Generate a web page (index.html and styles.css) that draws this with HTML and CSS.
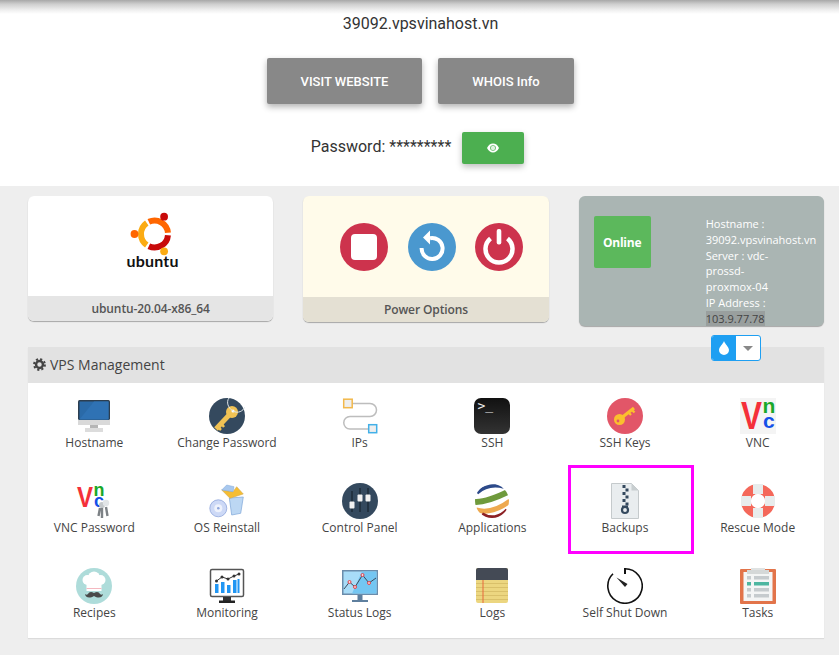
FILE: index.html
```html
<!DOCTYPE html>
<html lang="en">
<head>
<meta charset="utf-8">
<title>VPS Management</title>
<link rel="stylesheet" href="styles.css">
</head>
<body>
<header class="top">
  <div class="top-shadow"></div>
  <div class="title">39092.vpsvinahost.vn</div>
  <div class="actions">
    <a class="btn-grey btn-visit">VISIT WEBSITE</a>
    <a class="btn-grey btn-whois">WHOIS Info</a>
  </div>
  <div class="password">
    <span class="password-text">Password: *********</span>
    <button class="btn-eye" type="button">
      <svg width="12" height="10" viewBox="0 0 12 10"><path d="M0 5C1.500 2 3.500.6 6 .6S10.500 2 12 5c-1.500 3-3.500 4.400-6 4.400S1.500 8 0 5z" fill="#fff"/><circle cx="6" cy="5" r="2.800" fill="#4caf50"/><circle cx="6" cy="5" r="2.200" fill="#dff2e0"/></svg>
    </button>
  </div>
</header>

<main class="content">
  <section class="cards">
    <div class="card card-os">
      <div class="card-body os-body">
        <svg width="60" height="68" viewBox="0 0 60 68">
          <g fill="none" stroke-width="6">
            <path d="M27.800 18.770A13.500 13.500 0 0 1 46.950 29.820" stroke="#f60"/>
            <path d="M46.950 32.180A13.500 13.500 0 0 1 27.800 43.230" stroke="#c80a0a"/>
            <path d="M25.760 42.060A13.500 13.500 0 0 1 25.760 19.940" stroke="#fbab13"/>
          </g>
          <circle cx="43.100" cy="13.700" r="3.900" fill="#c80a0a"/>
          <circle cx="43.100" cy="48.300" r="3.900" fill="#fbab13"/>
          <circle cx="13.500" cy="31" r="3.900" fill="#f60"/>
          <text class="ubuntu-word" x="5.500" y="64" textLength="52" lengthAdjust="spacing">ubuntu</text>
        </svg>
      </div>
      <div class="card-band">ubuntu-20.04-x86_64</div>
    </div>

    <div class="card card-power">
      <div class="card-body power-body">
        <svg width="48" height="48" viewBox="0 0 48 48"><circle cx="24" cy="24" r="24" fill="#cd334d"/><rect x="11" y="11" width="26" height="26" rx="4" fill="#fff"/></svg>
        <svg width="48" height="48" viewBox="0 0 48 48"><circle cx="24" cy="24" r="24" fill="#4a98cf"/><path d="M22 15.200A10.500 10.500 0 1 1 13.600 25" fill="none" stroke="#fff" stroke-width="4"/><path d="M22 7.500v14l-7-7z" fill="#fff"/></svg>
        <svg width="48" height="48" viewBox="0 0 48 48"><circle cx="24" cy="24" r="24" fill="#cd334d"/><path d="M15.500 15.500A13.500 13.500 0 1 0 32.500 15.500" fill="none" stroke="#fff" stroke-width="4.500"/><rect x="21.700" y="6" width="4.600" height="15.500" rx="2" fill="#fff"/></svg>
      </div>
      <div class="card-band">Power Options</div>
    </div>

    <div class="card card-status">
      <div class="online">Online</div>
      <div class="status-text">
        <div>Hostname :</div>
        <div>39092.vpsvinahost.vn</div>
        <div>Server : vdc-</div>
        <div>prossd-</div>
        <div>proxmox-04</div>
        <div>IP Address :</div>
        <div><span class="ip">103.9.77.78</span></div>
      </div>
      <div class="split-btn">
        <span class="split-left"><svg width="10" height="14" viewBox="0 0 10 14"><path d="M5 0C4 3 0 6 0 9a5 5 0 0 0 10 0C10 6 6 3 5 0z" fill="#fff"/></svg></span>
        <span class="split-right"><span class="caret"></span></span>
      </div>
    </div>
  </section>

  <section class="manage">
    <h2 class="manage-head">
      <svg width="13" height="13" viewBox="0 0 14 14"><circle cx="7" cy="7" r="3.700" fill="none" stroke="#444" stroke-width="2.600"/><circle cx="7" cy="7" r="5.800" fill="none" stroke="#444" stroke-width="2.200" stroke-dasharray="2.300 2.250"/></svg>
      <span>VPS Management</span>
    </h2>
    <div class="grid">
      <div class="tool">
        <svg class="ico" viewBox="0 0 36 36"><rect x="2" y="2" width="32" height="20" rx="1.500" fill="#2c3e50"/><rect x="3.500" y="3.500" width="29" height="18" fill="#2a6aa8"/><path d="M3.500 21.500 18 3.500h14.500v18z" fill="#2f72b4"/><rect x="2" y="22" width="32" height="5" fill="#d9d9d9"/><rect x="14" y="27" width="8" height="4" fill="#b5b5b5"/><rect x="9" y="30" width="18" height="4" fill="#dcdcdc"/></svg>
        <span>Hostname</span>
      </div>
      <div class="tool">
        <svg class="ico" viewBox="0 0 36 36"><circle cx="18" cy="18" r="18" fill="#34495e"/><path d="M22 15 7 31" stroke="#f0c254" stroke-width="5"/><path d="M12 25l3 4M9 29l3 3" stroke="#f0c254" stroke-width="2.500"/><circle cx="23" cy="14" r="6" fill="#f0c254"/><circle cx="24" cy="13" r="1.500" fill="#fff"/><path d="M24 13C19 10 17 4 20 0M24 13c5 3 10 0 12-4" fill="none" stroke="#dfe6ea" stroke-width="1"/></svg>
        <span>Change Password</span>
      </div>
      <div class="tool">
        <svg class="ico" viewBox="0 0 36 36"><path d="M10 5.500h18a6.500 6.500 0 0 1 0 13H8a6.250 6.250 0 0 0 0 12.500h18" fill="none" stroke="#bdbdbd" stroke-width="1.500"/><rect x="1.700" y="1.200" width="8.500" height="8.500" fill="#eee" stroke="#f2b84b" stroke-width="1.500"/><rect x="26.700" y="26.700" width="8" height="8" fill="#eee" stroke="#42b0e8" stroke-width="1.500"/></svg>
        <span>IPs</span>
      </div>
      <div class="tool">
        <svg class="ico" viewBox="0 0 36 36"><defs><linearGradient id="term" x1="0" y1="0" x2="0" y2="1"><stop offset="0" stop-color="#111"/><stop offset="1" stop-color="#333"/></linearGradient></defs><rect width="36" height="36" rx="7" fill="url(#term)"/><text class="term-text" x="3.500" y="11.500">&gt;_</text></svg>
        <span>SSH</span>
      </div>
      <div class="tool">
        <svg class="ico" viewBox="0 0 36 36"><circle cx="18" cy="18" r="18" fill="#e25668"/><path d="M13 21 27 10" stroke="#fbc02d" stroke-width="3.200"/><path d="M21 14l3 3M24.500 11.500l3 3" stroke="#fbc02d" stroke-width="2.400"/><circle cx="12.500" cy="21.500" r="5.500" fill="#fbc02d"/><circle cx="11" cy="23" r="1.400" fill="#e25668"/></svg>
        <span>SSH Keys</span>
      </div>
      <div class="tool">
        <svg class="ico" viewBox="0 0 36 36"><rect width="36" height="36" fill="#f4f4f4"/><text class="vnc-v" x="1" y="31" font-size="38" textLength="21" lengthAdjust="spacingAndGlyphs">V</text><text class="vnc-n" x="22.500" y="15" font-size="21">n</text><text class="vnc-c" x="23" y="30" font-size="21">c</text></svg>
        <span>VNC</span>
      </div>

      <div class="tool">
        <svg class="ico" viewBox="0 0 36 36"><text class="vnc-v" x="1" y="24" font-size="30" textLength="16" lengthAdjust="spacingAndGlyphs">V</text><text class="vnc-n" x="17.500" y="13" font-size="18">n</text><text class="vnc-c" x="18" y="24" font-size="18">c</text><g fill="none" stroke="#7d8286" stroke-width="2.400"><path d="M26 24v11M30 24l1.500 9M24 25l-1.500 8"/></g><circle cx="26" cy="22" r="3" fill="#c4c8cb"/><circle cx="30" cy="20" r="3.200" fill="#e2e5e7"/></svg>
        <span>VNC Password</span>
      </div>
      <div class="tool">
        <svg class="ico" viewBox="0 0 36 36"><path d="M20.300 15l14-1-2.600 16.300-9 1.700z" fill="#bcd7f3" stroke="#7ea6d8" stroke-width=".7"/><path d="M12.700 7 21 15.300 34.300 11 27.700 3.700 24 8.700z" fill="#f5bd33" stroke="#c9a24a" stroke-width=".5"/><path d="M17.700 2 25 3.700 24 8.700 12.700 7z" fill="#a8c8ee" stroke="#7ea6d8" stroke-width=".5"/><circle cx="9.300" cy="25.300" r="8.500" fill="#cdd9f6" stroke="#8fa6dc" stroke-width=".8"/><circle cx="9.300" cy="25.300" r="4" fill="#eef2fc"/><circle cx="9.300" cy="25.300" r="1.300" fill="#8fa6dc"/></svg>
        <span>OS Reinstall</span>
      </div>
      <div class="tool">
        <svg class="ico" viewBox="0 0 36 36"><circle cx="18" cy="18" r="18" fill="#34495e"/><path d="M10 8v21M18 5v24M26 5v24" stroke="#1d2b39" stroke-width="1.500"/><rect x="7.500" y="18.500" width="5" height="7" rx="1" fill="#f1f1f1"/><rect x="15.500" y="11.500" width="5" height="7" rx="1" fill="#f1f1f1"/><rect x="23.500" y="11.500" width="5" height="7" rx="1" fill="#f1f1f1"/></svg>
        <span>Control Panel</span>
      </div>
      <div class="tool">
        <svg class="ico" viewBox="0 0 36 36"><defs><clipPath id="sphere"><circle cx="18" cy="18" r="17"/></clipPath></defs><g clip-path="url(#sphere)" fill="none"><path d="M3 10Q14 0 30 4" stroke="#2d4a8a" stroke-width="3.500"/><path d="M0 19C10 20 24 14 36 8" stroke="#6f9a3c" stroke-width="6"/><path d="M2 27C12 30 24 27 36 18" stroke="#eea94f" stroke-width="5"/><path d="M8 31C16 36 26 35 33 27" stroke="#8c2024" stroke-width="3.500"/></g></svg>
        <span>Applications</span>
      </div>
      <div class="tool">
        <svg class="ico" viewBox="0 0 36 36"><path d="M4.500.5h20l7 7v28h-27z" fill="#e9edef" stroke="#c5cacc"/><path d="M24.500.5v7h7z" fill="#c8ced0"/><path d="M15.500 2h3v3h-3zM18.500 5.500h3v3h-3zM15.500 9h3v3h-3zM18.500 12.500h3v3h-3zM15.500 16h3v3h-3zM18.500 19.500h3v3h-3z" fill="#34495e"/><circle cx="18" cy="27" r="3" fill="none" stroke="#34495e" stroke-width="2.200"/><rect x="15" y="22.500" width="6" height="2.500" fill="#34495e"/></svg>
        <span>Backups</span>
      </div>
      <div class="tool">
        <svg class="ico" viewBox="0 0 36 36"><circle cx="18" cy="18" r="12" fill="none" stroke="#f4685a" stroke-width="10"/><path d="M13 1h10v10H13zM13 25h10v10H13zM1 13h10v10H1zM25 13h10v10H25z" fill="#e8ecec"/><circle cx="18" cy="18" r="7" fill="#fff"/></svg>
        <span>Rescue Mode</span>
      </div>

      <div class="tool">
        <svg class="ico" viewBox="0 0 36 36"><circle cx="18" cy="18" r="18" fill="#aedcda"/><g fill="#fff"><circle cx="11.500" cy="12" r="5"/><circle cx="18" cy="9.500" r="6"/><circle cx="24.500" cy="12" r="5"/><rect x="10.500" y="12" width="15" height="11"/></g><rect x="10.500" y="20" width="15" height="1" fill="#f4b8c0"/><path d="M18 25c-3-2-5-1-6 1-1 1-2 1-3 0 0 3 4 5 9 2 5 3 9 1 9-2-1 1-2 1-3 0-1-2-3-3-6-1z" fill="#4a4a4a"/></svg>
        <span>Recipes</span>
      </div>
      <div class="tool">
        <svg class="ico" viewBox="0 0 36 36"><rect x="1.500" y="1.500" width="33" height="27" rx="1.500" fill="#fff" stroke="#555" stroke-width="1.500"/><path d="M6 16h3.500v9H6zM12 14h3.500v11H12zM18 17h3.500v8H18zM24 12h3.500v13H24zM28.500 11h2v14h-2z" fill="#2196f3"/><path d="M7.500 13 13 9l6 2 6-3 5-2" fill="none" stroke="#333" stroke-width="1"/><g fill="#333"><circle cx="7.500" cy="13" r="1.500"/><circle cx="13" cy="9" r="1.500"/><circle cx="19" cy="11" r="1.500"/><circle cx="25" cy="8" r="1.500"/><circle cx="30" cy="6" r="1.500"/></g><rect x="14" y="29" width="8" height="4" fill="#333"/><rect x="10" y="32.500" width="16" height="2.500" fill="#222"/></svg>
        <span>Monitoring</span>
      </div>
      <div class="tool">
        <svg class="ico" viewBox="0 0 36 36"><rect x="0" y="2" width="36" height="25" fill="#6b8cab"/><rect x="1.500" y="3.500" width="33" height="22" fill="#a8dcf8"/><path d="M20 3.500h14.500v22H10z" fill="#74c6f2"/><path d="M2 21l5.500-7 5.500 5 7.500-12 6.500 8 7-5" fill="none" stroke="#3d4b5c" stroke-width="1"/><g fill="#f8d7da" stroke="#e0454f" stroke-width="1"><circle cx="7.500" cy="14" r="1.500"/><circle cx="13" cy="19" r="1.500"/><circle cx="20.500" cy="7" r="1.500"/><circle cx="27" cy="15" r="1.500"/></g><rect x="15.500" y="27" width="5" height="6" fill="#5e7f9e"/><rect x="10" y="32" width="16" height="2" fill="#5e7f9e"/></svg>
        <span>Status Logs</span>
      </div>
      <div class="tool">
        <svg class="ico" viewBox="0 0 36 36"><rect x="2" width="32" height="35" rx="2" fill="#ecd680"/><path d="M2 2a2 2 0 0 1 2-2h28a2 2 0 0 1 2 2v10H2z" fill="#444a55"/><path d="M2 15.500h32M2 19.500h32M2 23.500h32M2 27.500h32M2 31.500h32" stroke="#d9c06a" stroke-width="1"/><rect x="8.500" y="12" width="1" height="23" fill="#e8683a"/></svg>
        <span>Logs</span>
      </div>
      <div class="tool">
        <svg class="ico" viewBox="0 0 36 36"><path d="M18 .8A17.200 17.200 0 1 1 6 5.700" fill="none" stroke="#111" stroke-width="1.600"/><rect x="17" y="0" width="2" height="6" fill="#111"/><path d="M9.500 9.500l11 6.500-2.500 3z" fill="#222"/></svg>
        <span>Self Shut Down</span>
      </div>
      <div class="tool">
        <svg class="ico" viewBox="0 0 36 36"><rect y="1" width="36" height="35" rx="1" fill="#e2744a"/><rect x="3.500" y="4" width="29" height="29" fill="#f4f5f5"/><rect x="11" y="0" width="14" height="3" fill="#dfe2e2"/><rect x="7" y="2" width="22" height="4" fill="#d5d8d8"/><g fill="#c6cbce"><rect x="7" y="8" width="4" height="3.500"/><rect x="14" y="8" width="15" height="3.500"/><rect x="7" y="20" width="4" height="3.500"/><rect x="14" y="20" width="15" height="3.500"/><rect x="7" y="26" width="4" height="3.500"/><rect x="14" y="26" width="15" height="3.500"/></g><rect x="7" y="14" width="4" height="3.500" fill="#4db6a0"/><rect x="14" y="14" width="15" height="3.500" fill="#4db6a0"/></svg>
        <span>Tasks</span>
      </div>
    </div>
    <div class="callout"></div>
  </section>
</main>
</body>
</html>
```

FILE: styles.css
```css
* { box-sizing: border-box; }
html, body { margin: 0; padding: 0; }
body {
  width: 839px;
  height: 655px;
  overflow: hidden;
  background: #eee;
  font-family: "Open Sans", sans-serif;
  color: #444;
}
.top {
  height: 186px;
  background: #fff;
  font-family: Roboto, sans-serif;
}
.top-shadow {
  height: 14px;
  background: linear-gradient(to bottom, #a8a8a8, #cfcfcf 30%, #eee 70%, #fff);
}
.title {
  height: 20px;
  line-height: 20px;
  padding-left: 2px;
  text-align: center;
  font-size: 16px;
  color: #333;
}
.actions {
  display: flex;
  justify-content: center;
  gap: 16px;
  margin-top: 24px;
  padding-left: 2px;
}
.btn-grey {
  display: flex;
  align-items: center;
  justify-content: center;
  height: 46px;
  padding-top: 1px;
  background: #888;
  border-radius: 2px;
  box-shadow: 0 3px 6px rgba(0, 0, 0, .3);
  color: #fff;
  font-size: 13px;
  font-weight: 500;
}
.btn-visit { width: 155px; }
.btn-whois { width: 136px; }
.password {
  display: flex;
  justify-content: center;
  align-items: center;
  gap: 11px;
  margin-top: 28px;
  padding-right: 4px;
  font-size: 16px;
  color: #333;
}
.password-text { padding-bottom: 4px; }
.btn-eye {
  display: flex;
  align-items: center;
  justify-content: center;
  width: 62px;
  height: 32px;
  padding: 0;
  border: 0;
  border-radius: 2px;
  background: #4caf50;
  box-shadow: 0 3px 6px rgba(0, 0, 0, .25);
}
.content { padding: 10px 15px 0 28px; }
.cards {
  display: grid;
  grid-template-columns: repeat(3, 1fr);
  gap: 30px;
  align-items: start;
}
.card {
  border-radius: 6px;
  overflow: hidden;
  box-shadow: 0 1px 1px rgba(0, 0, 0, .3);
}
.card-band {
  height: 25px;
  line-height: 25px;
  text-align: center;
  font-size: 12px;
  font-weight: 600;
  letter-spacing: -.1px;
  color: #555;
}
.card-os { background: #fff; }
.card-os .card-band { background: #e5e5e5; }
.os-body {
  display: flex;
  justify-content: center;
  height: 100px;
  padding-top: 7px;
}
.ubuntu-word {
  font-family: Lato, sans-serif;
  font-weight: 700;
  font-size: 16px;
  fill: #111;
}
.card-power { background: #fffbea; }
.card-power .card-band { background: #e4e0d3; }
.power-body {
  display: flex;
  justify-content: center;
  gap: 19.5px;
  height: 101px;
  padding: 27px 0 0 12px;
}
.card-status {
  position: relative;
  z-index: 1;
  display: flex;
  height: 130px;
  padding: 20px 0 0 15px;
  background: #aab5b3;
  overflow: visible;
}
.online {
  display: flex;
  align-items: center;
  justify-content: center;
  width: 57px;
  height: 52px;
  background: #5cb85c;
  border-radius: 2px;
  color: #fff;
  font-size: 12px;
  font-weight: 700;
  letter-spacing: -.2px;
}
.status-text {
  margin: 0 0 0 55px;
  font-size: 11px;
  line-height: 15.8px;
  color: #fff;
  white-space: nowrap;
}
.ip {
  background: #999f9e;
  color: #444;
}
.split-btn {
  position: absolute;
  left: 132px;
  top: 139px;
  display: flex;
  width: 50px;
  height: 26px;
  border: 1px solid #1e9ff2;
  border-radius: 3px;
  overflow: hidden;
  background: #fff;
}
.split-left {
  display: flex;
  align-items: center;
  justify-content: center;
  width: 24px;
  background: #1e9ff2;
}
.split-right {
  display: flex;
  align-items: center;
  justify-content: center;
  flex: 1;
}
.caret {
  border-left: 5px solid transparent;
  border-right: 5px solid transparent;
  border-top: 5px solid #888;
}
.manage {
  position: relative;
  margin-top: 21px;
  box-shadow: 0 1px 1px rgba(0, 0, 0, .08);
}
.manage-head {
  display: flex;
  align-items: center;
  gap: 4px;
  height: 36px;
  margin: 0;
  padding: 0 0 2px 5px;
  background: #e2e2e2;
  font-size: 14px;
  font-weight: 400;
  color: #444;
}
.grid {
  display: grid;
  grid-template-columns: repeat(6, 1fr);
  row-gap: 32px;
  padding: 15px 0 17px;
  background: #fff;
}
.tool {
  display: flex;
  flex-direction: column;
  align-items: center;
  gap: 1px;
  font-size: 12px;
  line-height: 16px;
  color: #444;
}
.ico {
  display: block;
  width: 36px;
  height: 36px;
}
.term-text {
  font-family: "DejaVu Sans Mono", monospace;
  font-size: 13px;
  fill: #eee;
}
.vnc-v {
  font-family: "Liberation Sans", sans-serif;
  font-weight: 700;
  fill: #f4303a;
}
.vnc-n {
  font-family: "Liberation Sans", sans-serif;
  font-weight: 700;
  fill: #1aa82a;
}
.vnc-c {
  font-family: "Liberation Sans", sans-serif;
  font-weight: 700;
  fill: #1450e8;
}
.callout {
  position: absolute;
  left: 540px;
  top: 118px;
  width: 126px;
  height: 89px;
  border: 3px solid #f0f;
}
```
